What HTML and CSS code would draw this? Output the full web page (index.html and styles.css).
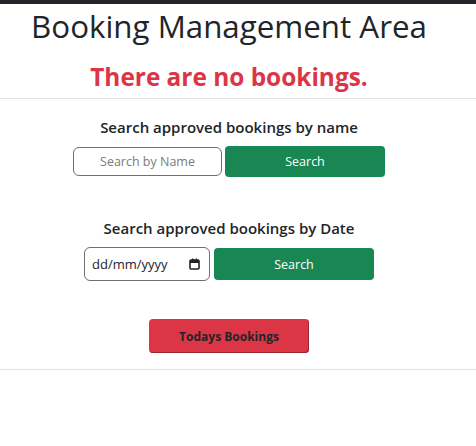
FILE: index.html
```html
<!DOCTYPE html>
<html lang="en">
<head>
<meta charset="utf-8">
<title>Booking Management Area</title>
<link rel="stylesheet" href="styles.css">
</head>
<body>
<div class="topbar"></div>
<div class="content">
  <h1 class="title">Booking Management Area</h1>
  <h3 class="empty">There are no bookings.</h3>
</div>
<hr class="rule">
<div class="content">
  <section class="search">
    <h5 class="label">Search approved bookings by name</h5>
    <form class="row">
      <input class="text-input" type="text" placeholder="Search by Name">
      <button class="btn btn-green btn-name" type="button">Search</button>
    </form>
  </section>
  <section class="search search-date">
    <h5 class="label">Search approved bookings by Date</h5>
    <form class="row">
      <div class="date-input">
        <span class="date-text">dd/mm/yyyy</span>
        <svg class="cal" width="11" height="12" viewBox="0 0 11 12"><rect x="1" y="2" width="9" height="9" rx="1" fill="none" stroke="#222" stroke-width="1.6"/><rect x="1" y="2" width="9" height="3" fill="#222"/><rect x="3" y="0.5" width="1.4" height="2" fill="#222"/><rect x="6.6" y="0.5" width="1.4" height="2" fill="#222"/></svg>
      </div>
      <button class="btn btn-green btn-date" type="button">Search</button>
    </form>
  </section>
  <div class="today-wrap">
    <button class="btn btn-red" type="button">Todays Bookings</button>
  </div>
</div>
<hr class="rule rule-bottom">
</body>
</html>
```
FILE: styles.css
```css
* { box-sizing: border-box; }
body {
  margin: 0;
  font-family: "Open Sans", "Noto Sans", sans-serif;
  color: #212529;
  background: #fff;
}
.topbar {
  height: 4px;
  background: #212529;
}
.content {
  padding-right: 18px;
  display: flex;
  flex-direction: column;
  align-items: center;
}
.title {
  margin: 2px 0 0;
  font-size: 31.3px;
  font-weight: 400;
  line-height: 40px;
}
.empty {
  margin: 15px 0 0;
  font-size: 24.4px;
  font-weight: 700;
  color: #dc3545;
  line-height: 32px;
}
.rule {
  margin: 5px 0 0;
  border: 0;
  border-top: 1px solid #dee2e6;
}
.search {
  display: flex;
  flex-direction: column;
  align-items: center;
  margin-top: 18px;
}
.search-date {
  margin-top: 41px;
}
.label {
  margin: 0 0 9px;
  font-size: 15px;
  font-weight: 600;
  line-height: 20px;
}
.row {
  display: flex;
  align-items: center;
  gap: 3px;
  margin: 0;
}
.text-input {
  width: 149px;
  height: 29px;
  border: 1px solid #6f6f6f;
  border-radius: 6px;
  text-align: center;
  font-family: inherit;
  font-size: 12.5px;
  color: #212529;
  padding: 0 6px;
}
.text-input::placeholder { color: #7b7b7b; }
.btn {
  border: 0;
  font-family: inherit;
  cursor: pointer;
}
.btn-green {
  background: #198754;
  color: #fff;
  border-radius: 4px;
  width: 160px;
  font-size: 12.5px;
}
.btn-name { height: 31px; }
.btn-date { height: 32px; }
.search-date .row { gap: 4px; }
.date-input {
  width: 126px;
  height: 34px;
  border: 1px solid #6f6f6f;
  border-radius: 6px;
  display: flex;
  align-items: center;
  justify-content: space-between;
  padding: 0 9px 0 7px;
  font-size: 13px;
}
.cal { display: block; }
.today-wrap {
  margin-top: 38px;
}
.btn-red {
  background: #dc3545;
  color: #212529;
  font-weight: 700;
  font-size: 12px;
  width: 160px;
  height: 34px;
  border-radius: 4px;
  box-shadow: inset -1px -1px 0 #9e2631;
}
.rule-bottom {
  margin-top: 16px;
}
```
